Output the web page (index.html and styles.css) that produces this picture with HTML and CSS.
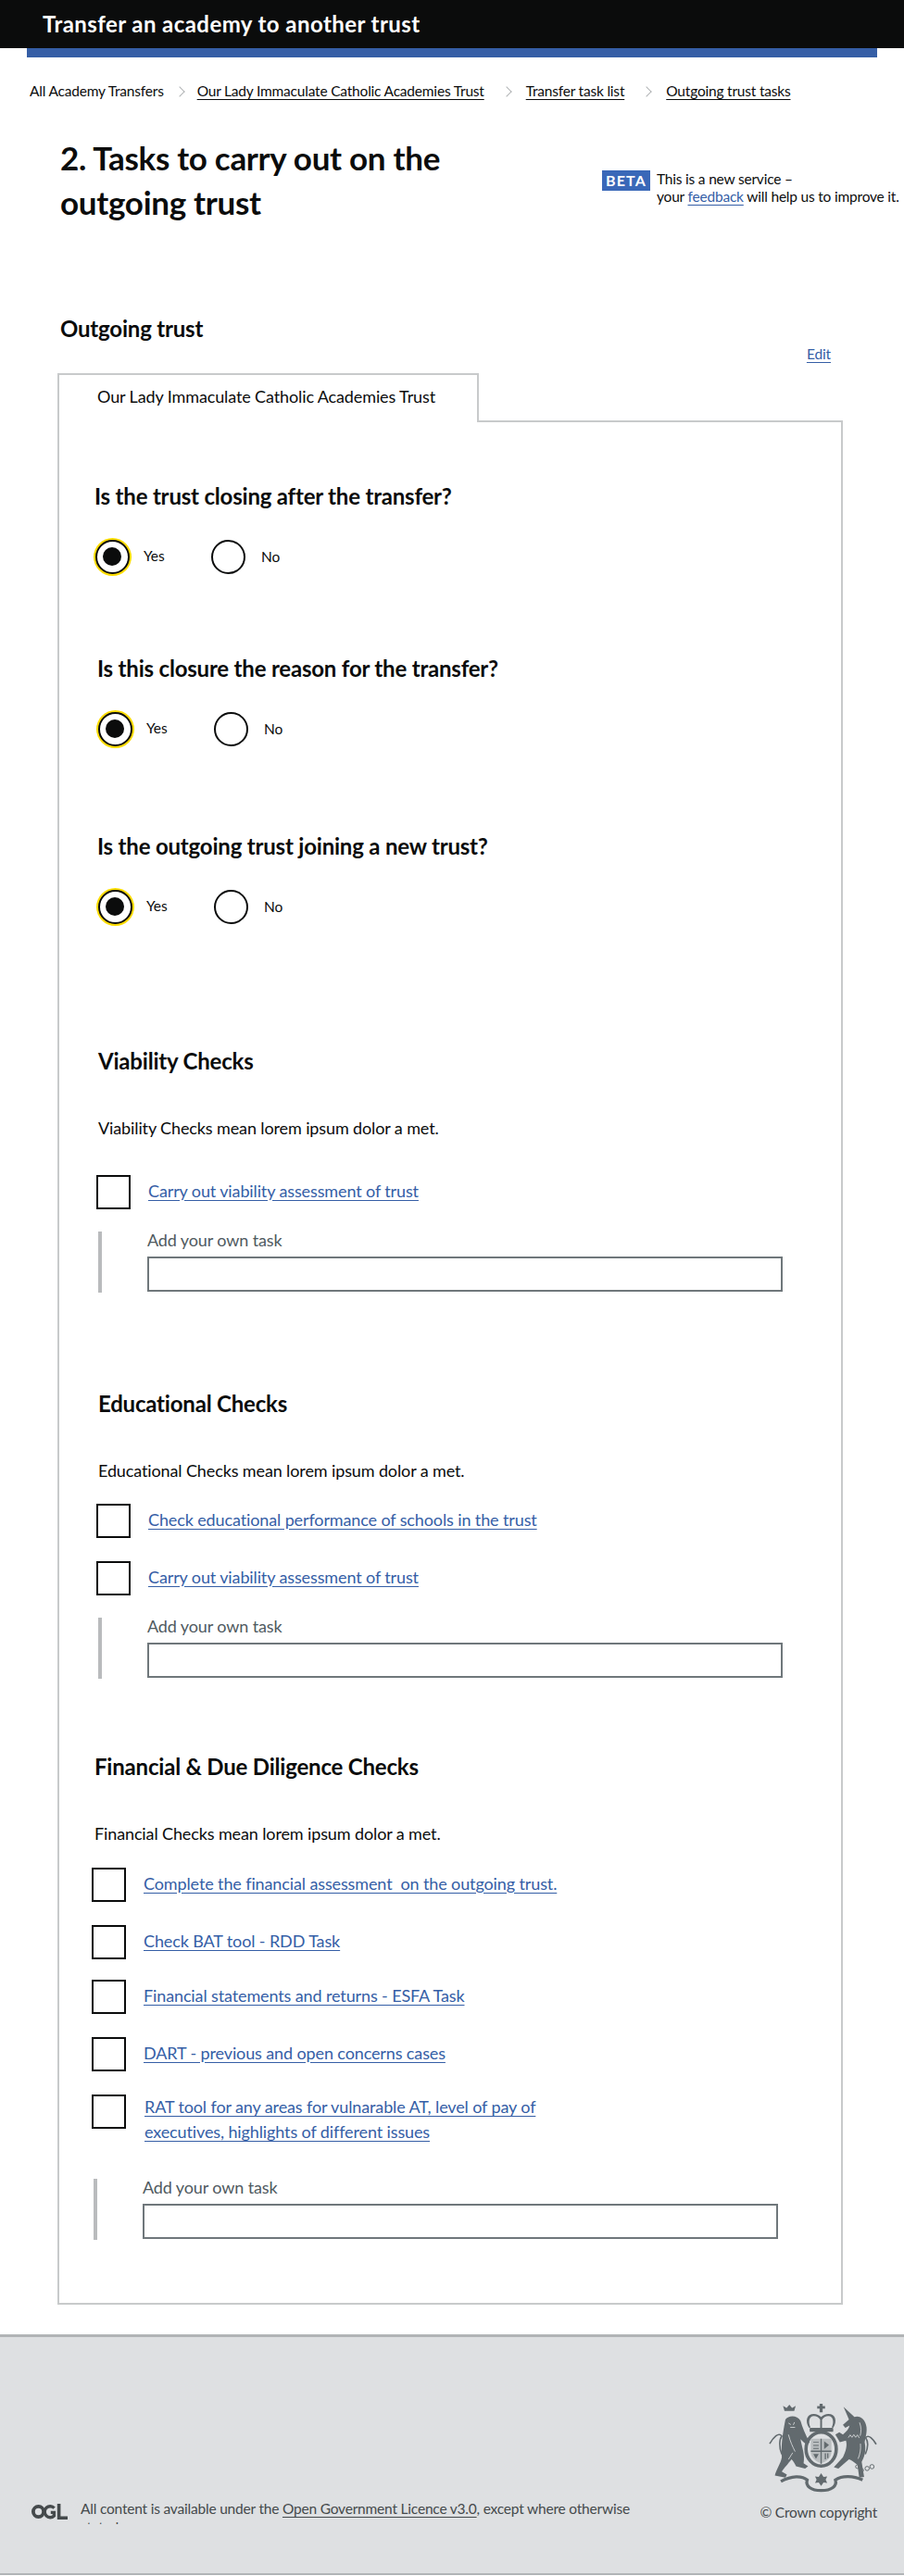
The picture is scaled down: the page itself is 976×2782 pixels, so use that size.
FILE: index.html
```html
<!DOCTYPE html>
<html lang="en">
<head>
    <meta charset="UTF-8">
    <meta name="viewport" content="width=device-width, initial-scale=1.0">
    <title>Outgoing trust tasks</title>
    <link rel="stylesheet" href="styles.css">
</head>
<body>
    <header class="site-header">Transfer an academy to another trust</header>
    <div class="header-bar"></div>

    <nav class="crumbs">
        <span class="crumb">All Academy Transfers</span>
        <a class="crumb" href="#">Our Lady Immaculate Catholic Academies Trust</a>
        <a class="crumb" href="#">Transfer task list</a>
        <a class="crumb" href="#">Outgoing trust tasks</a>
    </nav>

    <div class="title-row">
        <h1>2. Tasks to carry out on the outgoing trust</h1>
        <div class="beta">
            <strong class="beta-tag">BETA</strong>
            <p>This is a new service –<br>your <a href="#">feedback</a> will help us to improve it.</p>
        </div>
    </div>

    <h2 class="trust-heading">Outgoing trust</h2>
    <div class="edit-row"><a href="#">Edit</a></div>

    <div class="tab">Our Lady Immaculate Catholic Academies Trust</div>
    <main class="panel">
        <section class="question q-one">
            <h3>Is the trust closing after the transfer?</h3>
            <div class="radios">
                <div class="option"><span class="radio checked"></span><span class="yes-text">Yes</span></div>
                <div class="option"><span class="radio"></span><span>No</span></div>
            </div>
        </section>

        <section class="question q-two">
            <h3>Is this closure the reason for the transfer?</h3>
            <div class="radios">
                <div class="option"><span class="radio checked"></span><span class="yes-text">Yes</span></div>
                <div class="option"><span class="radio"></span><span>No</span></div>
            </div>
        </section>

        <section class="question q-three">
            <h3>Is the outgoing trust joining a new trust?</h3>
            <div class="radios">
                <div class="option"><span class="radio checked"></span><span class="yes-text">Yes</span></div>
                <div class="option"><span class="radio"></span><span>No</span></div>
            </div>
        </section>

        <section class="checks viability">
            <h3>Viability Checks</h3>
            <p class="intro">Viability Checks mean lorem ipsum dolor a met.</p>
            <div class="tasks">
                <div class="task"><span class="box"></span><a href="#">Carry out viability assessment of trust</a></div>
            </div>
            <div class="own-task">
                <label for="own1">Add your own task</label>
                <input id="own1" type="text">
            </div>
        </section>

        <section class="checks educational">
            <h3>Educational Checks</h3>
            <p class="intro">Educational Checks mean lorem ipsum dolor a met.</p>
            <div class="tasks">
                <div class="task"><span class="box"></span><a href="#">Check educational performance of schools in the trust</a></div>
                <div class="task"><span class="box"></span><a href="#">Carry out viability assessment of trust</a></div>
            </div>
            <div class="own-task">
                <label for="own2">Add your own task</label>
                <input id="own2" type="text">
            </div>
        </section>

        <section class="checks financial">
            <h3>Financial &amp; Due Diligence Checks</h3>
            <p class="intro">Financial Checks mean lorem ipsum dolor a met.</p>
            <div class="tasks">
                <div class="task"><span class="box"></span><a href="#">Complete the financial assessment&nbsp; on the outgoing trust.</a></div>
                <div class="task"><span class="box"></span><a href="#">Check BAT tool - RDD Task</a></div>
                <div class="task task-tight"><span class="box"></span><a href="#">Financial statements and returns - ESFA Task</a></div>
                <div class="task"><span class="box"></span><a href="#">DART - previous and open concerns cases</a></div>
                <div class="task task-wrapped"><span class="box"></span><a href="#">RAT tool for any areas for vulnarable AT, level of pay of<br>executives, highlights of different issues</a></div>
            </div>
            <div class="own-task">
                <label for="own3">Add your own task</label>
                <input id="own3" type="text">
            </div>
        </section>
    </main>

    <footer class="site-footer">
        <div class="licence">
            <svg class="ogl" viewBox="0 0 39 17" aria-label="OGL" role="img">
                <circle cx="7.5" cy="8.5" r="5.6" fill="none" stroke="#454a4c" stroke-width="3.8"/>
                <path d="M24.6 4.6A6 6 0 1 0 24.4 13V9.4h-3.6" fill="none" stroke="#454a4c" stroke-width="3.4"/>
                <path d="M29.6 0v15.2H39" fill="none" stroke="#454a4c" stroke-width="3.6"/>
            </svg>
            <p>All content is available under the <a href="#">Open Government Licence v3.0</a>, except where otherwise stated</p>
        </div>
        <div class="copyright">
            <svg class="crest" viewBox="85 45 355 300" aria-label="Royal coat of arms" role="img">
                <g fill="#626a6e">
                    <!-- crown -->
                    <path d="M253 48h10v8h8v8h-8v12h-10V64h-8v-8h8z"/>
                    <path d="M218 128c-14-22-8-46 16-46 10 0 18 4 24 10 6-6 14-10 24-10 24 0 30 24 16 46l-5-2c8-14 6-37-11-37-9 0-16 5-21 12v27h-6V101c-5-7-12-12-21-12-17 0-19 23-11 37z"/>
                    <rect x="220" y="128" width="78" height="13" rx="3"/>
                    <!-- lion -->
                    <path d="M140 100c10-15 40-15 50 5 6 20 15 45 30 70l-8 10c-12-10-17-15-22-20 5 30 15 50 10 80l15 10-10 7-30-7c-5-10-10-20-15-23-10 13-25 30-32 40l17 10-5 10-35-7c5-20 20-40 23-60-3-35 2-75 12-125z"/>
                    <path d="M137 72l-5-17 12 7 9-11 9 11 12-7-5 17z"/>
                    <!-- unicorn -->
                    <path d="M332 58l36 34c17-7 37 8 40 33 2 20-4 35-6 50 6 30-2 50-10 65l8 50-16 2-6-42c-13-10-20-15-28-18l-35 30-15-4 30-33c10-20 15-40 10-55l-20 5-15-25 13-8 12 8c12-10 20-20 22-30l-14 8-8-10 20-18z"/>
                    <!-- badge -->
                    <path d="M250 290l8-12 8 12 12-2-5 11 5 11-12-2-8 12-8-12-12 2 5-11-5-11z"/>
                </g>
                <g fill="none" stroke="#626a6e">
                    <path d="M128 215c-10-25-8-50 0-60-10-15-28 5-40 25M404 215c11-25 8-45 1-55 10-12 25 5 35 22" stroke-width="5"/>
                    <path d="M125 305c35-20 70-20 87-5-7 20 13 35 46 35 34 0 54-15 47-35 20-15 60-15 90 0" stroke-width="10"/>
                    <ellipse cx="258" cy="198" rx="50" ry="56" stroke-width="11"/>
                    <circle cx="378" cy="256" r="6" stroke-width="3"/>
                    <circle cx="392" cy="268" r="6" stroke-width="3"/>
                    <circle cx="410" cy="262" r="7" stroke-width="3"/>
                    <circle cx="426" cy="256" r="7" stroke-width="3"/>
                </g>
                <!-- shield -->
                <path d="M224 164h68v42c0 22-16 32-34 40-18-8-34-18-34-40z" fill="#b9bdbf"/>
                <path d="M258 164v82M224 205h68" stroke="#626a6e" stroke-width="4"/>
                <path d="M232 174h18v3h-18zM232 184h18v3h-18zM232 194h18v3h-18zM268 172l16 12-16 14zM232 214l18 0-9 16zM270 212h4v20h-4zM278 212h4v16h-4z" fill="#626a6e"/>
                <!-- cut lines on the supporters -->
                <path d="M150 112l8 5m12-8l-4 9m-10 8h16M150 150c6 24 14 40 22 56M150 232l14-22" stroke="#dee0e2" stroke-width="2.5" fill="none"/>
                <path d="M348 160l6-9 6 8 6-9 6 9 6-8 6 10M385 110c6 16 6 30 2 44M388 180c2 20-2 36-8 50" fill="none" stroke="#dee0e2" stroke-width="2.5"/>
            </svg>
            <p>© Crown copyright</p>
        </div>
    </footer>
</body>
</html>
```

FILE: styles.css
```css
* { box-sizing: border-box; }
body { margin: 0; font-family: Lato, "Liberation Sans", Arial, sans-serif; font-size: 18px; letter-spacing: -0.12px; color: #0b0c0c; background: #fff; }
h1, h2, h3, p { margin: 0; }
a { color: #355ea6; text-decoration: underline; text-underline-offset: 3px; }

/* header */
.site-header { height: 52px; padding-left: 46px; background: #0b0c0c; color: #fff; font-size: 24px; font-weight: 700; line-height: 52px; letter-spacing: 0.43px; }
.header-bar { height: 10px; margin: 0 29px; background: #355ea6; }

/* breadcrumbs */
.crumbs { display: flex; margin-top: 26px; padding-left: 32px; font-size: 15.5px; letter-spacing: -0.2px; line-height: 20px; }
.crumb { position: relative; color: #0b0c0c; white-space: nowrap; }
.crumb + .crumb { margin-left: 45px; }
.crumb + .crumb::before { content: ""; position: absolute; left: -25px; top: 7px; width: 7px; height: 7px; border-top: 1px solid #b1b4b6; border-right: 1px solid #b1b4b6; transform: rotate(45deg); }
.crumb:nth-child(2) { margin-left: 36px; }
.crumb:nth-child(2)::before { left: -23px; }

/* title and beta notice */
.title-row { display: flex; margin-top: 38px; padding-left: 65px; }
h1 { flex: none; width: 585px; padding-right: 120px; font-size: 35px; font-weight: 700; letter-spacing: -0.3px; line-height: 48px; }
.beta { display: flex; gap: 7px; margin-top: 38px; white-space: nowrap; font-size: 15.5px; letter-spacing: -0.2px; line-height: 19px; }
.beta-tag { flex: none; width: 52px; height: 22px; background: #3a68b8; color: #fff; font-size: 16px; text-align: center; line-height: 22px; letter-spacing: 1.2px; }

.trust-heading { margin-top: 98px; padding-left: 65px; font-size: 24px; letter-spacing: -0.2px; line-height: 30px; }
.edit-row { margin-top: 2px; padding-right: 79px; text-align: right; font-size: 15.5px; line-height: 20px; }

/* tab and its panel */
.tab { position: relative; width: 455px; height: 53px; margin: 11px 0 -2px 62px; padding: 11px 0 0 41px; background: #fff; border: 2px solid #c8cacb; border-bottom: none; line-height: 24px; }
.panel { width: 848px; margin-left: 62px; padding-bottom: 68px; border: 2px solid #c8cacb; }

/* radio questions */
h3 { font-size: 24px; font-weight: 700; letter-spacing: -0.2px; line-height: 30px; }
.q-one { margin: 65px 0 0 38px; }
.q-two { margin: 86px 0 0 41px; }
.q-three { margin: 92px 0 0 41px; }
.radios { display: flex; margin: 30px 0 0 -1px; }
.option { display: flex; align-items: center; gap: 15px; width: 127px; height: 40px; font-size: 15.5px; }
.radio { display: flex; flex: none; align-items: center; justify-content: center; width: 37px; height: 37px; margin-top: 1px; border: 2.5px solid #0b0c0c; border-radius: 50%; background: #fff; }
.option + .option .radio { margin-right: 2px; }
.radio.checked { width: 37px; height: 37px; margin: 1.5px; box-shadow: 0 0 0 2px #ffdd00; }
.radio.checked::after { content: ""; width: 20px; height: 20px; border-radius: 50%; background: #0b0c0c; }
.yes-text { margin: -3px 0 0 -1px; }

/* check lists */
.viability { margin: 132px 0 0 42px; }
.educational { margin: 105px 0 0 42px; }
.financial { margin: 80px 0 0 38px; }
.intro { margin-top: 45px; line-height: 25px; }
.tasks { display: flex; flex-direction: column; gap: 25px; margin: 23px 0 0 -2px; }
.viability .tasks { margin-top: 38px; }
.financial .tasks { margin: 24px 0 0 -3px; }
.task { display: flex; align-items: center; gap: 19px; line-height: 27px; }
.task a { margin-top: -3px; }
.financial .task-tight { margin-top: -3px; }
.financial .task-wrapped { align-items: flex-start; gap: 20px; }
.financial .task-wrapped a { margin-top: 0; }
.box { flex: none; width: 37px; height: 37px; border: 2.5px solid #0b0c0c; background: #fff; }

.own-task { display: flex; flex-direction: column; height: 66px; margin-top: 24px; padding-left: 49px; border-left: 4px solid #b9bbbd; color: #505a5f; }
.financial .own-task { margin: 37px 0 0 -1px; }
.own-task label { line-height: 18px; }
.own-task input { width: 686px; height: 38px; margin-top: 9px; border: 2px solid #6f777b; background: #fff; }

/* footer */
.site-footer { display: flex; justify-content: space-between; align-items: flex-end; margin-top: 32px; padding: 71px 29px 53px 34px; border-top: 3px solid #b1b4b6; border-bottom: 2px solid #b1b4b6; background: #dee0e2; color: #454a4c; font-size: 15.5px; letter-spacing: -0.2px; }
.site-footer a { color: #454a4c; }
.licence { display: flex; gap: 14px; height: 27px; overflow: hidden; }
.ogl { flex: none; width: 39px; height: 17px; margin-top: 5px; }
.licence p { width: 600px; line-height: 20px; }
.copyright { display: flex; flex-direction: column; align-items: flex-end; margin-bottom: 3px; line-height: 20px; }
.crest { display: block; width: 118px; height: 98px; margin: 0 0 10px; }
```
